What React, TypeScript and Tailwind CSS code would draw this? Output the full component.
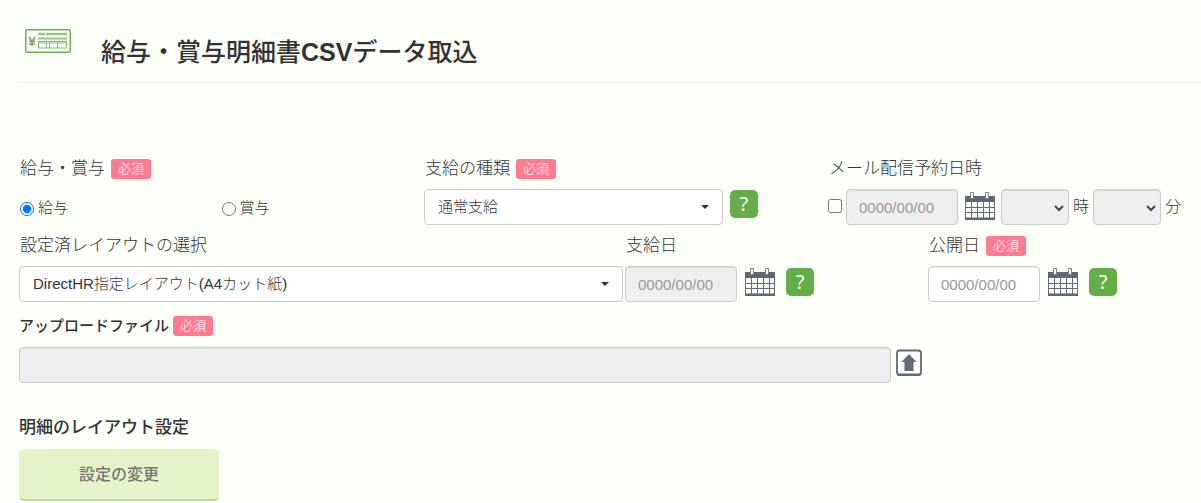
import { FC, ReactNode, useState } from "react";

const Required: FC = () => (
  <span className="flex h-5 w-10 items-center justify-center rounded-[3px] bg-[#ff7b92] text-[13px] leading-5 text-white">
    必須
  </span>
);

const CalendarIcon: FC = () => (
  <svg width="30" height="28" viewBox="0 0 30 28" fill="none">
    <path d="M0.5 10V27M6.5 10V27M12.5 10V27M18.5 10V27M24.5 10V27M29.5 10V27" stroke="#636a75" />
    <path d="M0 15.5H30M0 20.5H30" stroke="#636a75" />
    <path d="M0 4H30V10H0ZM0 25.5H30V28H0Z" fill="#5f6772" />
    <path d="M5.5 0.5H8.5V6.5H5.5ZM20.5 0.5H23.5V6.5H20.5Z" fill="#fff" stroke="#7b818b" />
  </svg>
);

const CalendarButton: FC<{ label: string }> = ({ label }) => (
  <button type="button" aria-label={label} className="shrink-0">
    <CalendarIcon />
  </button>
);

const HelpButton: FC = () => (
  <button
    type="button"
    className="h-7 w-7 shrink-0 rounded-[5px] bg-[#65ad49] font-['Noto_Sans',sans-serif] text-xl leading-7 font-normal text-white"
  >
    ?
  </button>
);

const PayslipIcon: FC = () => (
  <svg width="46" height="24" viewBox="0 0 46 24" fill="none" className="shrink-0">
    <rect x="0.75" y="0.75" width="44.5" height="22.5" rx="1" fill="#fff" stroke="#6ab350" strokeWidth="1.5" />
    <path d="M4 8L7 12.5L10 8M7 12.5V17M4 12.5H10M4 15H10" stroke="#6ab350" strokeWidth="1.6" />
    <path d="M13 5H20M21 5H42" stroke="#93c97e" strokeWidth="2.4" />
    <path d="M13 9.5H42" stroke="#93c97e" strokeWidth="2" />
    <path d="M13.5 12.5H41.5V19H13.5ZM13.5 14H41.5M21.5 14V19M24.5 14V19M32.5 14V19" stroke="#7fbd68" />
  </svg>
);

type SelectBoxProps = { id: string; className: string; options: string[] };

const SelectBox: FC<SelectBoxProps> = ({ id, className, options }) => (
  <div className={`relative ${className}`}>
    <select
      id={id}
      className="block h-9 w-full appearance-none rounded border border-[#ccc] bg-white pr-8 pl-[13px] text-[15px] text-[#333]"
    >
      {options.map((o) => (
        <option key={o}>{o}</option>
      ))}
    </select>
    <svg width="8" height="4" viewBox="0 0 8 4" className="pointer-events-none absolute top-4 right-[14px]">
      <path d="M0 0H8L4 4Z" fill="#333" />
    </svg>
  </div>
);

const TimeSelect: FC<{ label: string }> = ({ label }) => (
  <div className="relative w-[68px] shrink-0">
    <select
      disabled
      aria-label={label}
      className="block h-9 w-full appearance-none rounded border border-[#ccc] bg-[#eee] opacity-100 shadow-[inset_0_1px_1px_rgba(0,0,0,0.075)]"
    />
    <svg width="10" height="7" viewBox="0 0 10 7" fill="none" className="pointer-events-none absolute top-4 right-[5px]">
      <path d="M1 1L5 5L9 1" stroke="#444" strokeWidth="2" />
    </svg>
  </div>
);

const DateInput: FC<{ id: string; disabled?: boolean }> = ({ id, disabled }) => (
  <input
    id={id}
    type="text"
    placeholder="0000/00/00"
    disabled={disabled}
    className="h-9 w-28 shrink-0 rounded border border-[#ccc] bg-white px-3 text-[15px] shadow-[inset_0_1px_1px_rgba(0,0,0,0.075)] placeholder:text-[#999] disabled:bg-[#eee]"
  />
);

type FieldProps = { label: string; htmlFor?: string; required?: boolean; children: ReactNode };

const Field: FC<FieldProps> = ({ label, htmlFor, required, children }) => (
  <div className="min-w-0">
    <div className="mb-2 flex h-6 items-center gap-[6px] pl-px text-[17px] whitespace-nowrap">
      <label htmlFor={htmlFor}>{label}</label>
      {required && <Required />}
    </div>
    <div className="flex h-9 items-center">{children}</div>
  </div>
);

const App: FC = () => {
  const [kind, setKind] = useState("salary");

  return (
    <main className="min-h-screen bg-[#fdfff9] pl-[19px] font-['Liberation_Sans','Noto_Sans_CJK_JP',sans-serif] font-light text-[#333]">
      <header className="flex h-[83px] items-center border-b border-[#eee] pl-[6px]">
        <PayslipIcon />
        <h1 className="mt-6 ml-[30px] text-[25px] font-medium">
          給与・賞与明細書<span className="font-bold">CSV</span>データ取込
        </h1>
      </header>

      <form className="pt-[74px]" onSubmit={(e) => e.preventDefault()}>
        <div className="mb-[9px] grid grid-cols-[405fr_404fr_373fr]">
          <Field label="給与・賞与" required>
            <label className="flex w-1/2 items-center gap-1 pt-[3px] text-[15px]">
              <input
                type="radio"
                name="kind"
                className="ml-px h-[14px] w-[14px]"
                checked={kind === "salary"}
                onChange={() => setKind("salary")}
              />
              給与
            </label>
            <label className="flex items-center gap-1 pt-[3px] text-[15px]">
              <input
                type="radio"
                name="kind"
                className="h-[14px] w-[14px]"
                checked={kind === "bonus"}
                onChange={() => setKind("bonus")}
              />
              賞与
            </label>
          </Field>
          <Field label="支給の種類" htmlFor="payType" required>
            <SelectBox id="payType" className="w-[74%]" options={["通常支給"]} />
            <div className="mb-[6px] ml-[7px] flex">
              <HelpButton />
            </div>
          </Field>
          <Field label="メール配信予約日時" htmlFor="mailDate">
            <input type="checkbox" aria-label="メール配信予約" className="mr-1 mb-[2px] h-[14px] w-[14px] shrink-0" />
            <DateInput id="mailDate" disabled />
            <div className="mr-[6px] mb-[2px] ml-[7px] flex">
              <CalendarButton label="メール配信予約日" />
            </div>
            <TimeSelect label="時" />
            <span className="mx-1 text-base">時</span>
            <TimeSelect label="分" />
            <span className="ml-1 text-base">分</span>
          </Field>
        </div>

        <div className="mb-3 grid grid-cols-[606fr_303fr_273fr]">
          <Field label="設定済レイアウトの選択" htmlFor="layout">
            <SelectBox id="layout" className="mr-[2px] w-full" options={["DirectHR指定レイアウト(A4カット紙)"]} />
          </Field>
          <Field label="支給日" htmlFor="payDate">
            <DateInput id="payDate" disabled />
            <div className="mb-1 ml-2 flex gap-[11px]">
              <CalendarButton label="支給日カレンダー" />
              <HelpButton />
            </div>
          </Field>
          <Field label="公開日" htmlFor="openDate" required>
            <DateInput id="openDate" />
            <div className="mb-1 ml-2 flex gap-[11px]">
              <CalendarButton label="公開日カレンダー" />
              <HelpButton />
            </div>
          </Field>
        </div>

        <div className="mb-[9px] flex h-6 items-center gap-1">
          <label htmlFor="file" className="text-[15px] font-medium">
            アップロードファイル
          </label>
          <Required />
        </div>
        <div className="grid grid-cols-[872fr_310fr] items-center">
          <input
            id="file"
            type="text"
            readOnly
            className="h-9 rounded border border-[#ccc] bg-[#eee] px-3 shadow-[inset_0_1px_1px_rgba(0,0,0,0.075)]"
          />
          <button type="button" aria-label="ファイルを選択" className="mb-1 ml-[5px] justify-self-start">
            <svg width="26" height="28" viewBox="0 0 26 28" fill="none">
              <rect x="1" y="1.5" width="24" height="24.5" rx="2.5" fill="#fff" stroke="#636a75" strokeWidth="1.8" />
              <path d="M2 25H24V26.5H2Z" fill="#636a75" stroke="#636a75" />
              <path d="M13 5L20.5 13H17.5V22H8.5V13H5.5Z" fill="#636a75" />
            </svg>
          </button>
        </div>

        <h2 className="mt-[33px] mb-[9px] h-6 text-[17px] leading-6 font-medium">明細のレイアウト設定</h2>
        <button
          type="button"
          className="block h-[52px] w-[200px] rounded-[5px] border-b-2 border-[#c5d7a0] bg-[#e4f3c8] pt-[2px] text-base font-medium text-[#777]"
        >
          設定の変更
        </button>
      </form>
    </main>
  );
};

export default App;
